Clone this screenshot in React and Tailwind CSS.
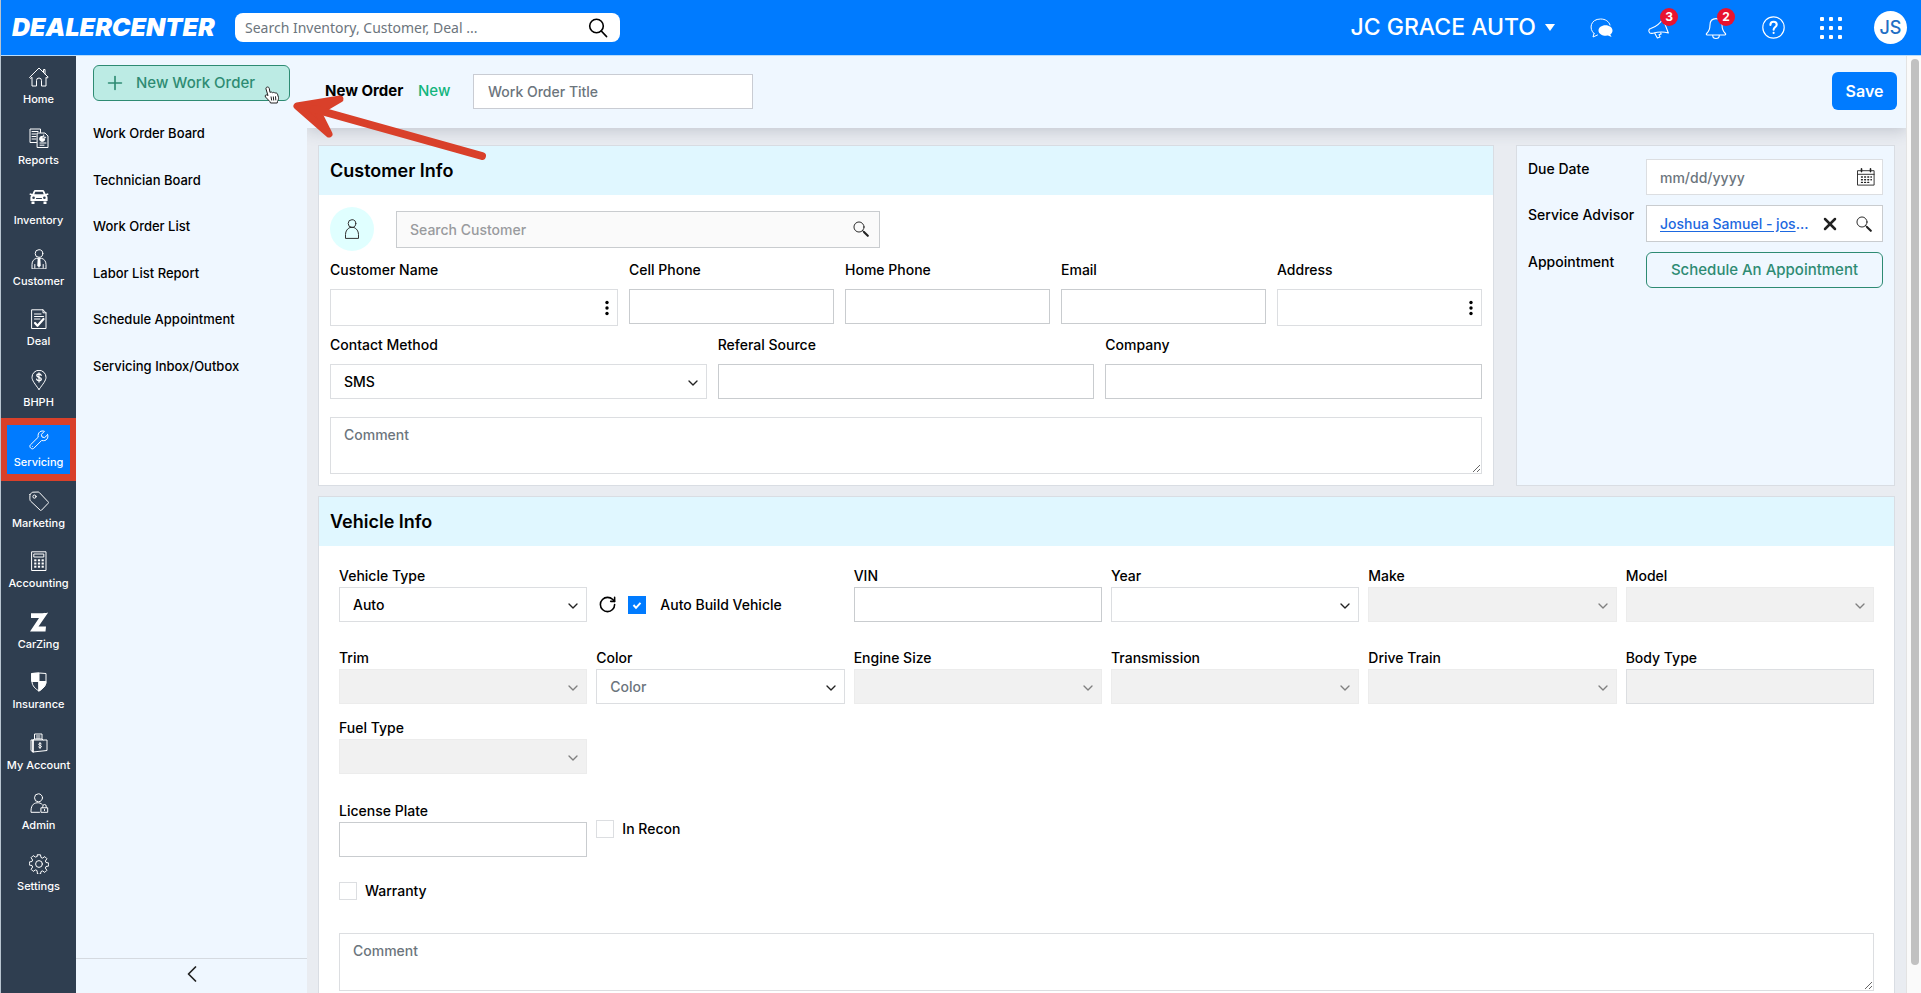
/**
 * App.jsx
 * Servicing: new work order form.
 */
import { ChevronDown, ChevronLeft, Plus, RotateCw, X } from "lucide-react";

/* ---------- Icons ---------- */

const Icon = ({ children, className = "w-5 h-5" }) => (
  <svg
    viewBox="0 0 20 20"
    className={className}
    fill="none"
    stroke="currentColor"
    strokeWidth="1"
    strokeLinecap="round"
    strokeLinejoin="round"
    aria-hidden="true"
  >
    {children}
  </svg>
);

const HomeIcon = () => (
  <Icon>
    <path d="M.8 10.2 10 1l9.2 9.2-1.2 1-1-.9V19h-4.5v-5.500a2.500 2.500 0 0 0-5 0V19H3v-8.700l-1 .9zM14.500 5.300V2.500H16v4.400" />
  </Icon>
);

const ReportsIcon = () => (
  <Icon>
    <path d="M7.500 14.500H1V1h10.500v3.500M3 3.500h6M3 6h4M3 8.500h4M3 11h4" />
    <path d="M8.500 5H16l3 3v11.500H8.500zM11 15h6M11 17.200h4" />
    <path d="M13.200 8.200a2.600 2.600 0 1 0 2.600 2.600h-2.600z" fill="currentColor" />
    <path d="M14.700 7v2.300h2" />
  </Icon>
);

const InventoryIcon = () => (
  <Icon>
    <path
      d="M4.600 3.200C4.900 2.400 5.500 2 6.300 2h7.400c.8 0 1.400.4 1.700 1.200L16.600 6l2.400-.8.6 1.200-2 1c.8.7 1 1.500 1 2.400V13H1.400V9.800c0-.9.200-1.700 1-2.400l-2-1L1 5.200 3.400 6zM2.500 13.500h3V16h-3zM14.500 13.500h3V16h-3z"
      fill="currentColor"
      stroke="none"
    />
    <path d="M5.300 6.300 6.300 3.700h7.400l1 2.600z" fill="#2f3e50" stroke="none" />
    <circle cx="4.600" cy="9.800" r="1.300" fill="#2f3e50" stroke="none" />
    <circle cx="15.400" cy="9.800" r="1.300" fill="#2f3e50" stroke="none" />
    <path d="M7.500 10.500h5" stroke="#2f3e50" />
  </Icon>
);

const CustomerIcon = () => (
  <Icon>
    <circle cx="10" cy="4.500" r="3.800" />
    <path d="M3 19.500v-4c0-3.500 2-5.500 4.500-6.200h5c2.500.7 4.500 2.700 4.500 6.200v4zM5.800 19v-3.500M14.200 19v-3.500" />
    <path d="m9 9.500-.5 7 1.500 2 1.500-2-.5-7z" fill="currentColor" strokeWidth=".5" />
  </Icon>
);

const DealIcon = () => (
  <Icon>
    <path d="M3 .8h11l3 3v15.700H3zM14 .8v3h3M5.500 5H12M5.500 7.500h9M5.500 10H11" />
    <path d="m6 14 2.500 2.800L14.500 10" strokeWidth="2.200" />
  </Icon>
);

const BhphIcon = () => (
  <Icon>
    <path d="M10 19.500C6 14 3 10.500 3 7.300a7 7 0 0 1 14 0c0 3.200-3 6.700-7 12.200z" />
    <path d="M12.200 5.300C12 4.400 11.200 4 10 4c-1.300 0-2.200.6-2.200 1.600 0 2.300 4.500 1.200 4.500 3.500 0 1-.9 1.700-2.300 1.700-1.300 0-2.200-.6-2.400-1.600M10 2.800v9.200" strokeWidth="1.300" />
  </Icon>
);

const ServicingIcon = () => (
  <Icon>
    <path d="M18.700 4.700 15.600 7.600l-2.600-.6-.6-2.600L15.400 1.300C12.400.2 8.300 2 9.200 7.200L1.300 15c-1.600 1.800 1.400 5 3.300 3.500l8-8c5 1.100 7.200-2.700 6.100-5.800z" />
    <path d="m3.300 16.700.1-.1" />
  </Icon>
);

const MarketingIcon = () => (
  <Icon>
    <path d="M1 3.500 3.300 1.200 9 1c.6 0 1 .2 1.400.6l8.700 9.200c.5.5.5 1 0 1.500l-6.500 6.800c-.5.5-1 .5-1.500 0L1.500 10C.7 9 .8 8 1 3.500z" />
    <circle cx="5.500" cy="5.600" r="1.600" />
  </Icon>
);

const AccountingIcon = () => (
  <Icon>
    <path d="M3 .8h14v18.700H3zM5.200 3h9.600v3H5.200z" />
    {[8.300, 11.500, 14.700].map((y) =>
      [5.200, 8.900, 12.600].map((x) => (
        <rect key={`${x}-${y}`} x={x} y={y} width="2.200" height="2" fill="currentColor" stroke="none" />
      ))
    )}
  </Icon>
);

const CarZingIcon = () => (
  <Icon>
    <path d="M2 1.200h9c3 0 5.500 0 8.200-.7L9.500 14.500H17L16.500 19.500H1L10 6H2z" fill="currentColor" stroke="none" />
  </Icon>
);

const InsuranceIcon = () => (
  <Icon>
    <path d="M3 1.500 10 1l7 .5v8.300c0 4-3.500 7.200-7 9.200-3.500-2-7-5.200-7-9.200z" />
    <path d="M3 1.500 10 1v8.500H3zM10 9.500h7c0 4-3.500 7.500-7 9.500z" fill="currentColor" />
  </Icon>
);

const MyAccountIcon = () => (
  <Icon>
    <path d="M5.500 6V1H13v5M7.500 3h3.500M7.500 5h3.500M4 7H2v10.500L4 19zM4 7h14v10.500L4 19zM4 7l1.500-1H13l1 1" />
    <path d="M12.300 10.800c-.9-.9-2.700-.5-2.600.6.100 1.300 2.700.8 2.800 2.100.1 1.200-2 1.500-2.900.5M11 9.500v6" />
  </Icon>
);

const AdminIcon = () => (
  <Icon>
    <circle cx="9.500" cy="4.800" r="4" />
    <path d="M10.500 19.300H2C1.800 13 4 10.200 8 9.800c2.200-.2 4 .4 5.300 1.700" />
    <path d="M12.300 14.800h6.400v4.500h-6.400zM13.800 14.500v-1.300a1.700 1.700 0 0 1 3.400 0v1.300M15.500 16.500v1" />
  </Icon>
);

const SettingsIcon = () => (
  <Icon>
    <circle cx="10" cy="10" r="3.400" />
    <path d="M8.500.8h3l.5 2.700 1.500.6 2.300-1.500 2.100 2.100-1.500 2.300.6 1.500 2.700.5v3l-2.700.5-.6 1.500 1.500 2.300-2.100 2.100-2.300-1.500-1.500.6-.5 2.700h-3L8 16.500l-1.500-.6-2.300 1.500-2.100-2.100L3.600 13 3 11.500.3 11V8L3 7.500 3.600 6 2.100 3.700l2.100-2.100 2.300 1.500L8 2.500z" />
  </Icon>
);

const SearchIcon = ({ className }) => (
  <Icon className={className}>
    <circle cx="7.500" cy="7.500" r="6.300" strokeWidth="1.200" />
    <path d="m12 12 2 2" strokeWidth="1.300" />
    <path d="m14 14 4.500 4.500" strokeWidth="2.600" />
  </Icon>
);

const CalendarIcon = () => (
  <Icon className="w-[18px] h-[18px]">
    <path d="M1 3h18v16H1zM1 7h18" />
    <path d="M5 1v3M15 1v3" strokeWidth="1.800" />
    <path d="M5 10h11M5 13h11M5 16h8" strokeWidth="1.500" strokeDasharray="1 2.500" />
  </Icon>
);

const DotsIcon = () => (
  <svg viewBox="0 0 4 16" className="w-1 h-4" fill="currentColor" aria-hidden="true">
    <circle cx="2" cy="2.500" r="1.700" />
    <circle cx="2" cy="8" r="1.700" />
    <circle cx="2" cy="13.500" r="1.700" />
  </svg>
);

/* ---------- Data ---------- */

const NAV = [
  { label: "Home", icon: HomeIcon },
  { label: "Reports", icon: ReportsIcon },
  { label: "Inventory", icon: InventoryIcon },
  { label: "Customer", icon: CustomerIcon },
  { label: "Deal", icon: DealIcon },
  { label: "BHPH", icon: BhphIcon },
  { label: "Servicing", icon: ServicingIcon, active: true },
  { label: "Marketing", icon: MarketingIcon },
  { label: "Accounting", icon: AccountingIcon },
  { label: "CarZing", icon: CarZingIcon },
  { label: "Insurance", icon: InsuranceIcon },
  { label: "My Account", icon: MyAccountIcon },
  { label: "Admin", icon: AdminIcon },
  { label: "Settings", icon: SettingsIcon },
];

const MENU = [
  "Work Order Board",
  "Technician Board",
  "Work Order List",
  "Labor List Report",
  "Schedule Appointment",
  "Servicing Inbox/Outbox",
];

/* ---------- Form pieces ---------- */

const Field = ({ id, label, tight, children }) => (
  <div className={`flex flex-col min-w-0 ${tight ? "gap-px" : "gap-[9px]"}`}>
    <label htmlFor={id} className="h-5 leading-5 text-sm whitespace-nowrap">
      {label}
    </label>
    {children}
  </div>
);

const TextInput = ({ id, disabled }) => (
  <input
    id={id}
    type="text"
    disabled={disabled}
    className="w-full h-[35px] px-3 text-sm bg-white border border-[#c9cccf] disabled:bg-[#f1f1f1] disabled:border-[#dcdee1]"
  />
);

const MenuInput = ({ id, label }) => (
  <div className="flex items-center h-[37px] pr-2 bg-white border border-[#dcdee1]">
    <input id={id} type="text" className="flex-1 min-w-0 h-full px-3 text-sm" />
    <button type="button" aria-label={`${label} options`}>
      <DotsIcon />
    </button>
  </div>
);

const Select = ({ id, value = "", muted, disabled }) => (
  <div className="relative">
    <select
      id={id}
      defaultValue={value}
      disabled={disabled}
      className={`block w-full h-[35px] px-[13px] text-sm appearance-none border ${
        disabled ? "bg-[#f1f1f1] border-[#ececec]" : "bg-white border-[#dcdee1]"
      } ${muted ? "text-[#6c757d]" : "text-black"}`}
    >
      <option value={value}>{value}</option>
    </select>
    <ChevronDown
      size={16}
      strokeWidth={2}
      className={`absolute right-[6px] top-[11px] pointer-events-none ${disabled ? "text-[#808080]" : "text-[#222]"}`}
    />
  </div>
);

const CheckBox = ({ id, label, checked, wide }) => (
  <div className={`flex items-center ${wide ? "gap-3.5" : "gap-2"}`}>
    <span className="relative flex">
      <input
        id={id}
        type="checkbox"
        defaultChecked={checked}
        className="peer w-[18px] h-[18px] appearance-none bg-white border border-[#dcdee1] checked:bg-[#007bff] checked:border-[#007bff]"
      />
      <svg
        viewBox="0 0 18 18"
        className="absolute inset-0 hidden peer-checked:block pointer-events-none"
        fill="none"
        stroke="#fff"
        strokeWidth="2"
        aria-hidden="true"
      >
        <path d="m5.500 9 2.500 2.800 4.500-5" />
      </svg>
    </span>
    <label htmlFor={id} className="leading-5 text-sm whitespace-nowrap">
      {label}
    </label>
  </div>
);

const CardTitle = ({ children }) => (
  <h2 className="flex items-center h-[49px] px-[11px] text-lg font-semibold bg-[#e0f7ff]">{children}</h2>
);

/* ---------- Page sections ---------- */

const Badge = ({ children }) => (
  <span className="absolute -top-[9px] left-3 flex items-center justify-center w-[18px] h-[18px] rounded-full bg-[#e8132f] text-xs font-bold">
    {children}
  </span>
);

const TopBar = () => (
  <header className="flex items-center justify-between h-14 pl-[11px] pr-3.5 shrink-0 text-white bg-[#007bff] border-b border-[#b8dcfb]">
    <div className="flex items-center">
      <a href="#home" className="w-[223px] text-[25px] leading-none font-black italic font-['Inter',sans-serif]">
        DEALERCENTER
      </a>
      <div className="flex items-center w-[385px] h-[29px] pl-2.5 pr-3 rounded-lg bg-white text-black">
        <input
          type="text"
          aria-label="Search"
          placeholder="Search Inventory, Customer, Deal ..."
          className="flex-1 min-w-0 text-sm font-normal outline-none placeholder:text-[#6c757d] font-['Noto_Sans',sans-serif]"
        />
        <button type="button" aria-label="Search">
          <Icon className="w-5 h-5">
            <circle cx="8.500" cy="8" r="6.800" strokeWidth="1.600" />
            <path d="m13.300 13 5.200 5.500" strokeWidth="1.800" />
          </Icon>
        </button>
      </div>
    </div>

    <div className="flex items-center">
      <button type="button" className="flex items-center gap-[9px] mr-[35px] text-[23px] font-medium">
        JC GRACE AUTO
        <svg viewBox="0 0 10 7" className="w-2.5 h-[7px]" fill="currentColor" aria-hidden="true">
          <path d="M0 0h10L5 7z" />
        </svg>
      </button>
      <button type="button" aria-label="Messages" className="mr-[35px]">
        <svg viewBox="0 0 23 20" className="w-[23px] h-5" aria-hidden="true">
          <path
            d="M4 15.500C-1.500 11 .5 1 10.500 1c5 0 8.500 2.500 9.500 6M4 15.500 3 19l4.500-2"
            fill="none"
            stroke="currentColor"
            strokeLinecap="round"
          />
          <path d="M15.500 7.200c4 0 7 2.300 7 5.200 0 1.700-.8 3-2.200 4l1.300 2.600-3.600-1.500c-5 .7-9.500-1.300-9.500-5.100 0-2.900 3-5.200 7-5.200z" fill="currentColor" />
        </svg>
      </button>
      <button type="button" aria-label="Announcements" className="relative mr-[35px]">
        <Icon className="w-[22px] h-[22px]">
          <path d="M1 13.500C.4 11.800 1 11 2.500 10.500 8 8.500 11 6 13.500 1.500l5 13c-5-1.500-9-1.200-14 .2-1.700.5-3 .2-3.500-1.200zM6 14.500l2.500 4.500 2.500-.8-1-2 2-.7-.5-1.200" />
        </Icon>
        <Badge>3</Badge>
      </button>
      <button type="button" aria-label="Notifications" className="relative mr-[35px]">
        <Icon className="w-[22px] h-[22px]">
          <path d="M10 1.500C6.500 1.500 4.500 4 4.500 7.500c0 4-1 5.500-3 7.500-.6.600-.3 1.300.5 1.300h16c.8 0 1.100-.7.500-1.300-2-2-3-3.500-3-7.500 0-3.500-2-6-5.500-6zM7 16.500a3 3 0 0 0 6 0" />
        </Icon>
        <Badge>2</Badge>
      </button>
      <button type="button" aria-label="Help" className="mr-[35px]">
        <Icon className="w-[23px] h-[23px]">
          <circle cx="10" cy="10" r="9.300" />
          <path d="M7.300 7.800c0-1.700 1.200-2.800 2.800-2.800 1.500 0 2.700 1 2.700 2.500 0 2-2.700 2.200-2.700 4.500M10.100 14.600v.2" strokeWidth="1.800" />
        </Icon>
      </button>
      <button type="button" aria-label="Apps" className="mr-8">
        <svg viewBox="0 0 22 22" className="w-[22px] h-[22px]" fill="currentColor" aria-hidden="true">
          {[0, 9, 18].map((y) => [0, 9, 18].map((x) => <rect key={`${x}-${y}`} x={x} y={y} width="4" height="4" rx="1" />))}
        </svg>
      </button>
      <button type="button" className="w-[33px] h-[33px] rounded-full bg-white text-[#1f6fc4] text-lg leading-none font-medium">
        JS
      </button>
    </div>
  </header>
);

const NavRail = () => (
  <nav className="w-[75px] shrink-0 bg-[#2f3e50] text-white">
    <ul className="flex flex-col h-[847px]">
      {NAV.map(({ label, icon: Glyph, active }) => (
        <li key={label} className="flex-1">
          <a
            href={`#${label}`}
            className={`flex flex-col items-center justify-center gap-1 h-full pt-0.5 text-[11px] leading-4 font-medium whitespace-nowrap ${
              active ? "bg-[#007bff] outline-[7px] outline-[#d9402a] -outline-offset-[6px]" : ""
            }`}
          >
            <Glyph />
            {label}
          </a>
        </li>
      ))}
    </ul>
  </nav>
);

const ServicingMenu = () => (
  <aside className="flex flex-col w-[231px] shrink-0 bg-[#eff7ff]">
    <div className="relative px-[17px] pt-[9px]">
      <button
        type="button"
        className="flex items-center gap-2.5 w-full h-9 pl-2.5 rounded-md border border-[#2e8b73] bg-[#bcebe4] text-[15px] font-medium text-[#2e8b73]"
      >
        <Plus size={22} strokeWidth={1.800} />
        New Work Order
      </button>
      {/* Pointer over the button */}
      <svg viewBox="0 0 18 18" className="absolute left-[187px] top-[30px] w-[18px] h-[18px]" aria-hidden="true">
        <path
          d="M4.500 1c1 0 1.600.6 1.800 1.500L7 6.500c.8-.7 2-.6 2.500.2.900-.6 2-.4 2.400.4 1-.4 2.300 0 2.600 1l1 3.400c.3 1.500-.5 3-1 3.900l-.3 1.600H7.500l-.7-1.500L2.500 11c-1-1.400.3-2.700 1.800-1.900l.7.6L3 3C2.700 1.900 3.500 1 4.500 1z"
          fill="#fff"
          stroke="#222"
        />
        <path d="M8 10.500l.7 4M10.300 10.500l.4 4M12.500 10.300l.3 4" stroke="#222" fill="none" />
      </svg>
    </div>
    <ul className="flex flex-col justify-between h-[253px] mt-[22px] px-[17px]">
      {MENU.map((item) => (
        <li key={item} className="h-5 leading-5 text-[13px] font-medium">
          <a href="#servicing">{item}</a>
        </li>
      ))}
    </ul>
    <button
      type="button"
      aria-label="Collapse menu"
      className="flex items-center justify-center h-[35px] mt-auto pb-1 border-t border-[#d5dae0] text-[#222]"
    >
      <ChevronLeft size={28} strokeWidth={1.500} />
    </button>
  </aside>
);

const OrderHeader = () => (
  <div className="relative flex items-center h-[72px] pl-[18px] pr-[9px] pb-0.5 shrink-0 bg-[#eff7ff] shadow-[0_3px_14px_rgba(60,70,90,0.22)]">
    <h1 className="w-[93px] text-[15px] font-bold whitespace-nowrap">New Order</h1>
    <span className="w-[55px] text-[15px] font-medium text-[#12b57d]">New</span>
    <input
      type="text"
      aria-label="Work Order Title"
      placeholder="Work Order Title"
      className="w-[280px] h-[35px] px-3.5 text-sm bg-white border border-[#c9ccd3] placeholder:text-[#6c757d]"
    />
    <button type="button" className="w-[65px] h-[38px] ml-auto rounded-md bg-[#007bff] text-base font-semibold text-white">
      Save
    </button>
  </div>
);

const CustomerCard = () => (
  <section className="flex-1 min-w-0 bg-white border border-[#d9dde3]">
    <CardTitle>Customer Info</CardTitle>
    <div className="flex flex-col gap-[9px] px-[11px] pt-3 pb-[11px]">
      <div className="flex items-center gap-[22px]">
        <span className="flex items-center justify-center w-11 h-11 rounded-full bg-[#e0ffff] text-[#333]">
          <Icon>
            <circle cx="10" cy="4.500" r="3.800" />
            <path d="M3.500 19v-3.500c0-3.500 2-6 4.500-7h4c2.500 1 4.500 3.500 4.500 7V19z" />
          </Icon>
        </span>
        <div className="flex items-center w-[484px] h-[37px] pr-2.5 bg-[#fafafa] border border-[#c9cccf]">
          <input
            type="text"
            aria-label="Search Customer"
            placeholder="Search Customer"
            className="flex-1 min-w-0 h-full px-[13px] text-sm placeholder:text-[#999b9e]"
          />
          <button type="button" aria-label="Find customer" className="text-[#222]">
            <SearchIcon className="w-4 h-4" />
          </button>
        </div>
      </div>

      <div className="grid grid-cols-[288fr_205fr_205fr_205fr_205fr] gap-[11px]">
        <Field id="name" label="Customer Name">
          <MenuInput id="name" label="Customer name" />
        </Field>
        <Field id="cell" label="Cell Phone">
          <TextInput id="cell" />
        </Field>
        <Field id="home-phone" label="Home Phone">
          <TextInput id="home-phone" />
        </Field>
        <Field id="email" label="Email">
          <TextInput id="email" />
        </Field>
        <Field id="address" label="Address">
          <MenuInput id="address" label="Address" />
        </Field>
      </div>

      <div className="grid grid-cols-3 gap-[11px]">
        <Field id="contact" label="Contact Method">
          <Select id="contact" value="SMS" />
        </Field>
        <Field id="referral" label="Referal Source">
          <TextInput id="referral" />
        </Field>
        <Field id="company" label="Company">
          <TextInput id="company" />
        </Field>
      </div>

      <textarea
        aria-label="Customer comment"
        placeholder="Comment"
        className="block w-full h-[57px] mt-[9px] px-[13px] py-[7px] text-sm border border-[#dcdee1] placeholder:text-[#6c757d]"
      />
    </div>
  </section>
);

const ScheduleCard = () => (
  <section className="w-[379px] shrink-0 px-[11px] py-[13px] bg-[#eff7ff] border border-[#d9dde3]">
    <div className="grid grid-cols-[118px_minmax(0,1fr)] gap-y-[10px]">
      <label htmlFor="due" className="leading-5 text-sm">
        Due Date
      </label>
      <div className="flex items-center h-9 pr-[7px] bg-white border border-[#dcdee1]">
        <input
          id="due"
          type="text"
          placeholder="mm/dd/yyyy"
          className="flex-1 min-w-0 h-full px-[13px] text-sm placeholder:text-[#6c757d]"
        />
        <button type="button" aria-label="Pick a date" className="text-[#222]">
          <CalendarIcon />
        </button>
      </div>

      <span className="leading-5 text-sm">Service Advisor</span>
      <div className="flex items-center h-[37px] pl-[13px] pr-2.5 bg-white border border-[#c9cccf]">
        <p className="w-[150px] text-sm text-[#1d68e0] whitespace-nowrap">
          <a href="#advisor" className="underline underline-offset-2">
            Joshua Samuel - jos
          </a>
          ...
        </p>
        <button type="button" aria-label="Clear advisor" className="ml-auto mr-4 text-[#222]">
          <X size={20} strokeWidth={3} />
        </button>
        <button type="button" aria-label="Find advisor" className="text-[#222]">
          <SearchIcon className="w-4 h-4" />
        </button>
      </div>

      <span className="leading-5 text-sm">Appointment</span>
      <button type="button" className="h-9 rounded-md border border-[#2e8b73] text-[15px] font-medium text-[#2e8b73]">
        Schedule An Appointment
      </button>
    </div>
  </section>
);

const VehicleCard = () => (
  <section className="bg-white border border-[#d9dde3]">
    <CardTitle>Vehicle Info</CardTitle>
    <div className="px-5 pt-5 pb-3">
      <div className="grid grid-cols-6 gap-x-[9px]">
        <Field id="vtype" label="Vehicle Type" tight>
          <Select id="vtype" value="Auto" />
        </Field>
        <div className="flex items-center gap-[11px] h-[35px] mt-[21px] pl-0.5">
          <button type="button" aria-label="Reset vehicle">
            <RotateCw size={19} strokeWidth={2} />
          </button>
          <CheckBox id="autobuild" label="Auto Build Vehicle" checked wide />
        </div>
        <Field id="vin" label="VIN" tight>
          <TextInput id="vin" />
        </Field>
        <Field id="year" label="Year" tight>
          <Select id="year" />
        </Field>
        <Field id="make" label="Make" tight>
          <Select id="make" disabled />
        </Field>
        <Field id="model" label="Model" tight>
          <Select id="model" disabled />
        </Field>
      </div>

      <div className="grid grid-cols-6 gap-x-[9px] gap-y-3.5 mt-[26px]">
        <Field id="trim" label="Trim" tight>
          <Select id="trim" disabled />
        </Field>
        <Field id="color" label="Color" tight>
          <Select id="color" value="Color" muted />
        </Field>
        <Field id="engine" label="Engine Size" tight>
          <Select id="engine" disabled />
        </Field>
        <Field id="transmission" label="Transmission" tight>
          <Select id="transmission" disabled />
        </Field>
        <Field id="drivetrain" label="Drive Train" tight>
          <Select id="drivetrain" disabled />
        </Field>
        <Field id="body" label="Body Type" tight>
          <TextInput id="body" disabled />
        </Field>
        <Field id="fuel" label="Fuel Type" tight>
          <Select id="fuel" disabled />
        </Field>
      </div>

      <div className="grid grid-cols-6 gap-x-[9px] mt-[27px]">
        <Field id="plate" label="License Plate" tight>
          <TextInput id="plate" />
        </Field>
        <div className="pt-[18px]">
          <CheckBox id="recon" label="In Recon" />
        </div>
      </div>

      <div className="mt-6">
        <CheckBox id="warranty" label="Warranty" />
      </div>

      <textarea
        aria-label="Vehicle comment"
        placeholder="Comment"
        className="block w-full h-[58px] mt-8 px-[13px] py-[7px] text-sm border border-[#dcdee1] placeholder:text-[#6c757d]"
      />
    </div>
  </section>
);

/* Red arrow that points at the New Work Order button */
const CalloutArrow = () => (
  <svg
    viewBox="0 0 200 70"
    className="absolute left-[289px] top-[92px] w-[200px] h-[70px] pointer-events-none"
    stroke="#d9402a"
    strokeLinecap="round"
    strokeLinejoin="round"
    aria-hidden="true"
  >
    <path d="M7 14 50 7 33 17 29 22 39 42z" fill="#d9402a" strokeWidth="7" />
    <path d="M24 17 192 64" fill="none" strokeWidth="8" />
  </svg>
);

const App = () => {
  return (
    <div className="relative flex flex-col h-screen overflow-hidden border-l border-[#b8c4d0] bg-[#e9ecf1] text-black font-medium font-['Inter',sans-serif]">
      <TopBar />
      <div className="flex flex-1 min-h-0">
        <NavRail />
        <ServicingMenu />
        <main className="flex flex-col flex-1 min-w-0 overflow-hidden">
          <OrderHeader />
          <div className="flex flex-col gap-2.5 pl-[11px] pr-[11px] pt-[17px]">
            <div className="flex gap-[22px]">
              <CustomerCard />
              <ScheduleCard />
            </div>
            <VehicleCard />
          </div>
        </main>
        {/* Scroll track */}
        <div className="w-[15px] shrink-0 pt-[3px] pl-1 bg-[#fafafa] border-l border-[#e3e3e3]">
          <div className="w-2 h-[906px] rounded-full bg-[#c1c1c1]" />
        </div>
      </div>
      <CalloutArrow />
    </div>
  );
};

export default App;
